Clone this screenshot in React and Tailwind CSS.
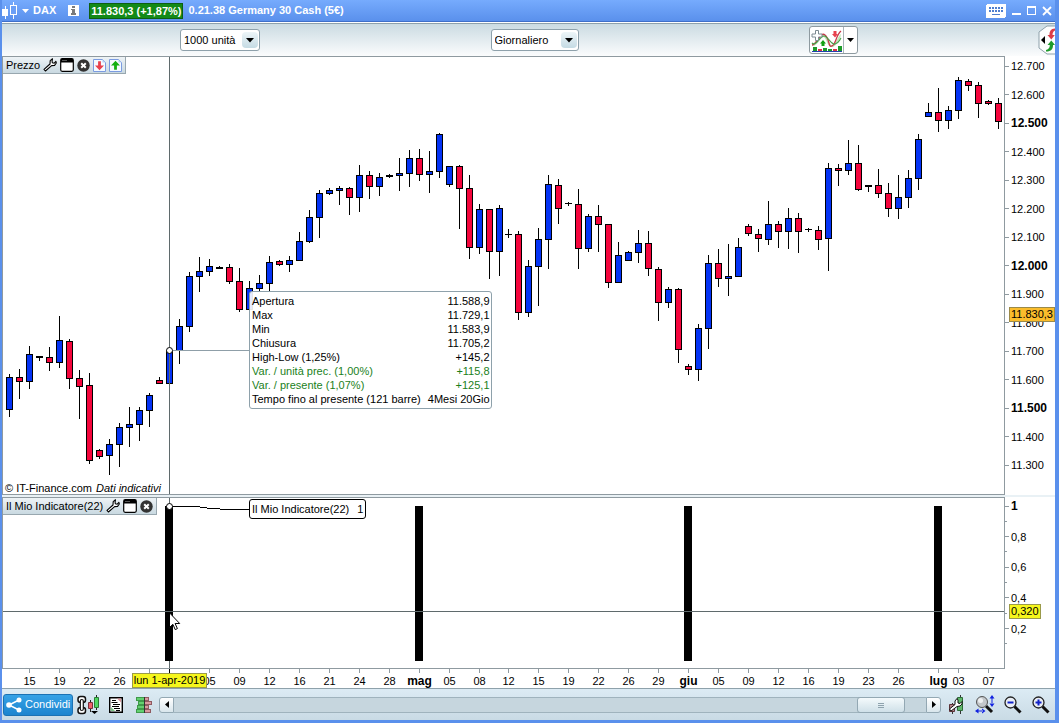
import React, { useState } from 'react';

// Plot coordinates: x 3..1004, price pane y 57..494, indicator pane y 498..668
const X0 = 3;
const PLOT_W = 1001;
const PRICE = { top: 57, height: 437 };
const IND = { top: 498, height: 170 };

// [high, bodyTop, bodyBottom, low, type]  b = up, r = down, d = doji
const CANDLES = [
  [374, 377, 410, 417, 'b'], [369, 377, 382, 399, 'r'], [346, 354, 382, 389, 'b'], [356, 356, 358, 361, 'd'],
  [347, 357, 363, 371, 'r'], [316, 340, 363, 368, 'b'], [339, 341, 379, 389, 'r'], [370, 378, 387, 419, 'r'],
  [373, 385, 461, 464, 'r'], [449, 450, 457, 459, 'r'], [439, 444, 456, 475, 'b'], [423, 427, 445, 467, 'b'],
  [407, 424, 428, 447, 'b'], [407, 410, 425, 441, 'b'], [393, 395, 411, 427, 'b'], [377, 380, 384, 384, 'r'],
  [343, 350, 384, 385, 'b'], [319, 326, 351, 364, 'b'], [272, 276, 327, 332, 'b'], [257, 271, 277, 292, 'b'],
  [259, 266, 272, 276, 'b'], [266, 267, 269, 269, 'd'], [264, 267, 282, 284, 'r'], [268, 281, 310, 312, 'r'],
  [281, 288, 310, 310, 'b'], [275, 283, 289, 292, 'b'], [256, 262, 284, 292, 'b'], [260, 261, 265, 266, 'r'],
  [256, 260, 265, 272, 'b'], [232, 241, 261, 261, 'b'], [210, 217, 242, 243, 'b'], [190, 193, 218, 238, 'b'],
  [188, 190, 194, 195, 'b'], [186, 188, 191, 205, 'b'], [187, 188, 198, 215, 'r'], [165, 175, 198, 212, 'b'],
  [171, 175, 187, 199, 'r'], [173, 177, 187, 196, 'b'], [174, 175, 177, 178, 'd'], [158, 173, 176, 191, 'b'],
  [150, 158, 174, 187, 'b'], [149, 158, 175, 181, 'r'], [151, 171, 175, 193, 'b'], [133, 134, 172, 178, 'b'],
  [166, 166, 185, 187, 'b'], [165, 166, 189, 229, 'r'], [175, 188, 248, 259, 'r'], [204, 209, 248, 254, 'b'],
  [209, 209, 252, 279, 'r'], [205, 208, 252, 276, 'b'], [229, 234, 235, 238, 'd'], [231, 234, 313, 320, 'r'],
  [260, 266, 313, 317, 'b'], [228, 239, 267, 306, 'b'], [175, 184, 240, 269, 'b'], [179, 185, 209, 224, 'r'],
  [202, 203, 204, 206, 'd'], [189, 204, 249, 269, 'r'], [214, 216, 249, 252, 'b'], [205, 216, 225, 252, 'r'],
  [224, 224, 283, 288, 'r'], [242, 255, 283, 283, 'b'], [251, 252, 261, 261, 'b'], [230, 243, 253, 263, 'b'],
  [231, 243, 269, 276, 'r'], [267, 269, 303, 321, 'r'], [287, 289, 303, 308, 'b'], [288, 289, 350, 363, 'r'],
  [364, 366, 370, 375, 'r'], [324, 328, 370, 381, 'b'], [255, 263, 329, 349, 'b'], [249, 263, 279, 287, 'r'],
  [244, 276, 279, 296, 'b'], [238, 247, 277, 277, 'b'], [224, 226, 234, 236, 'r'], [229, 234, 239, 252, 'r'],
  [201, 224, 240, 245, 'b'], [221, 224, 232, 248, 'r'], [208, 218, 232, 249, 'b'], [213, 218, 232, 253, 'r'],
  [228, 229, 230, 232, 'd'], [226, 230, 240, 250, 'r'], [163, 168, 239, 271, 'b'], [164, 168, 171, 186, 'r'],
  [140, 163, 171, 175, 'b'], [145, 163, 190, 191, 'r'], [185, 185, 187, 192, 'd'], [169, 185, 194, 198, 'r'],
  [183, 193, 209, 217, 'r'], [175, 197, 209, 219, 'b'], [170, 178, 198, 208, 'b'], [134, 139, 179, 190, 'b'],
  [103, 112, 117, 117, 'b'], [88, 112, 121, 132, 'r'], [106, 110, 121, 129, 'b'], [77, 80, 111, 119, 'b'],
  [79, 81, 86, 91, 'r'], [82, 85, 104, 118, 'r'], [100, 101, 104, 105, 'r'], [98, 103, 122, 129, 'r'],
];

const PRICE_TICKS = [
  '12.700', '12.600', '12.500', '12.400', '12.300', '12.200', '12.100', '12.000',
  '11.900', '11.800', '11.700', '11.600', '11.500', '11.400', '11.300',
];
const BOLD_PRICES = ['12.500', '12.000', '11.500'];

// empty strings are the minor ticks
const IND_TICKS = ['1', '', '0,8', '', '0,6', '', '0,4', '', '0,2', ''];

const DATES = [
  [29, '15'], [59, '19'], [89, '22'], [119, '26'], [149, ''], [209, '05'], [239, '09'], [269, '12'],
  [299, '16'], [329, '21'], [359, '24'], [389, '28'], [419, 'mag'], [449, '05'], [479, '08'], [508, '12'],
  [538, '15'], [568, '19'], [598, '22'], [628, '26'], [658, '29'], [688, 'giu'], [718, '05'], [748, '09'],
  [778, '12'], [808, '16'], [838, '19'], [868, '23'], [898, '26'], [938, 'lug'], [958, '03'], [988, '07'],
];

const SIGNALS = [169, 419, 688, 938];

const QUOTE = [
  ['Apertura', '11.588,9'],
  ['Max', '11.729,1'],
  ['Min', '11.583,9'],
  ['Chiusura', '11.705,2'],
  ['High-Low (1,25%)', '+145,2'],
  ['Var. / unità prec. (1,00%)', '+115,8', true],
  ['Var. / presente (1,07%)', '+125,1', true],
  ['Tempo fino al presente (121 barre)', '4Mesi 20Gio'],
];

const left = (x) => `${((x - X0) / PLOT_W) * 100}%`;
const top = (y, pane) => `${((y - pane.top) / pane.height) * 100}%`;

function WrenchIcon() {
  return (
    <svg width="14" height="14" viewBox="0 0 14 14" fill="#fff" stroke="#000" strokeWidth="1.1" strokeLinejoin="round">
      <path d="M9.5 .8 7.2 2.6 7 6 1 11.3 2.4 13 8.6 7.6 11.6 7.4 13.3 5 12.9 3.4 11.2 5.2 9.3 4.8 9.1 3z" />
    </svg>
  );
}

function WindowIcon() {
  return (
    <svg width="14" height="14" viewBox="0 0 14 14">
      <rect x=".7" y=".7" width="12.6" height="12.6" rx="1.5" fill="#fff" stroke="#000" strokeWidth="1.2" />
      <path d="M1 1h12v3.5H1z" />
      <path d="M2 2h5v1H2z" fill="#555" />
    </svg>
  );
}

function CloseIcon() {
  return (
    <svg width="13" height="13" viewBox="0 0 13 13">
      <circle cx="6.5" cy="6.5" r="6.2" fill="#333" />
      <path d="M4.2 4.2l4.6 4.6M8.800 4.2L4.2 8.800" stroke="#fff" strokeWidth="2" />
    </svg>
  );
}

function PageArrowIcon({ up }) {
  return (
    <svg width="13" height="13" viewBox="0 0 13 13">
      <path d="M.5 .5h9l3 3v9H.5z" fill="#f4faff" stroke="#7b9be0" />
      <path d="M9.5 .5v3h3z" fill="#b7cdf2" />
      {up ? (
        <path d="M6.5 1.8 11 6.4H7.9v4.4H5.1V6.4H2z" fill="#12b012" />
      ) : (
        <path d="M6.5 11.2 11 6.6H7.9V2.2H5.1v4.4H2z" fill="#e8414d" />
      )}
    </svg>
  );
}

function PanelTab({ title, arrows }) {
  return (
    <div className="absolute left-0 top-0 flex h-[17px] items-center gap-[3px] border-b border-r border-[#98a7af] bg-linear-to-b from-[#eef3f6] to-[#c9d9e1] px-[3px]">
      <span className="whitespace-nowrap">{title}</span>
      <button aria-label="Proprietà"><WrenchIcon /></button>
      <button aria-label="Finestra"><WindowIcon /></button>
      <button aria-label="Chiudi pannello"><CloseIcon /></button>
      {arrows && <button aria-label="Sposta giù"><PageArrowIcon /></button>}
      {arrows && <button aria-label="Sposta su"><PageArrowIcon up /></button>}
    </div>
  );
}

function Marker({ x, y, pane }) {
  return (
    <span
      className="absolute -ml-[3px] -mt-[3px] size-[7px] rounded-full border border-black bg-white"
      style={{ left: left(x), top: top(y, pane) }}
    />
  );
}

function TitleBar() {
  return (
    <header className="flex h-[22px] items-center border-b border-[#3f6fc8] bg-linear-to-b from-[#76abfd] to-[#5a90ec] pr-[3px] font-bold text-white">
      <svg width="16" height="17" viewBox="0 0 16 17" shapeRendering="crispEdges">
        <path d="M0 7h6v7H0zM3 4h1v13H3zM11 0h1v17h-1z" fill="#fff" />
        <path d="M8.5 3.5h6v9h-6z" fill="#6b9ff5" stroke="#fff" />
      </svg>
      <svg className="ml-1" width="7" height="4" viewBox="0 0 7 4"><path d="M0 0h7L3.5 4z" fill="#fff" /></svg>
      <span className="ml-1">DAX</span>
      <svg className="ml-3" width="11" height="11" viewBox="0 0 11 11" shapeRendering="crispEdges">
        <path d="M0 0h11v11H0z" fill="#fff" />
        <path d="M4 1h3v2H4zM3 4h4v4h1v2H3V8h1V5H3z" fill="#7b7b7b" />
      </svg>
      <span className="ml-[10px] border border-[#0c5f12] bg-[#138a17] px-px leading-[14px]">11.830,3 (+1,87%)</span>
      <span className="ml-[5px] flex-1 whitespace-nowrap">0.21.38 Germany 30 Cash (5€)</span>
      <button aria-label="Tastiera">
        <svg width="20" height="14" viewBox="0 0 20 14" shapeRendering="crispEdges">
          <rect width="20" height="14" rx="2" fill="#fff" />
          <path d="M3 4h14M3 7h14" stroke="#4f7fd0" strokeWidth="2" strokeDasharray="2 1" />
          <path d="M6 10h8v1H6z" fill="#4f7fd0" />
        </svg>
      </button>
      <button aria-label="Riduci" className="ml-1.5">
        <svg width="10" height="10" viewBox="0 0 10 10"><path d="M0 7h9v2H0z" fill="#fff" /></svg>
      </button>
      <button aria-label="Ingrandisci" className="ml-[5px]">
        <svg width="10" height="10" viewBox="0 0 10 10" shapeRendering="crispEdges"><path d="M0 0h9v9H0zM1 2v6h7V2z" fill="#fff" fillRule="evenodd" /></svg>
      </button>
      <button aria-label="Chiudi" className="ml-[5px]">
        <svg width="10" height="10" viewBox="0 0 10 10"><path d="M1 1l8 8M9 1L1 9" stroke="#fff" strokeWidth="1.8" /></svg>
      </button>
    </header>
  );
}

function Dropdown({ label, options, width }) {
  return (
    <label className="relative block">
      <select
        aria-label={label}
        className={`block h-[22px] appearance-none rounded-[3px] border border-[#8ea1ab] bg-white pl-[3px] ${width}`}
      >
        {options.map((o) => <option key={o}>{o}</option>)}
      </select>
      <span className="pointer-events-none absolute bottom-[3px] right-[2px] top-[3px] flex w-4 items-center justify-center rounded-sm bg-linear-to-b from-[#edf5f8] to-[#c5dbe4]">
        <svg width="8" height="5" viewBox="0 0 8 5"><path d="M0 0h8L4 4.5z" /></svg>
      </span>
    </label>
  );
}

function Toolbar() {
  return (
    <div className="flex h-[33px] items-center border-t border-[#8ea1ab] bg-linear-to-b from-[#cbdbe2] to-[#fbfcfd]">
      <div className="flex flex-1 items-center justify-between pl-[178px] pr-[180px]">
        <Dropdown label="Unità" options={['1000 unità', '500 unità', '200 unità']} width="w-20" />
        <Dropdown label="Periodo" options={['Giornaliero', 'Settimanale', 'Mensile']} width="w-22" />
        <div className="flex h-7 rounded-[3px] border border-[#8e9aa0] bg-white">
          <button aria-label="Aggiungi indicatore" className="px-px">
            <svg width="31" height="25" viewBox="0 0 31 25">
              <path d="M1 16C5 17 8 4 13 7s6 14 10 9 5-9 7-10l-1 5c-3 4-5 9-9 8S15 8 12 9 6 19 1 18z" fill="#bfe8b8" />
              <path d="M1 17C6 17 9 3 14 7s3 13 7 11 4-11 9-15" fill="none" stroke="#c8384a" strokeWidth="1.3" />
              <path d="M1 15C5 19 9 8 13 8s7 9 11 8 4-3 6-6" fill="none" stroke="#46a04a" strokeWidth="1.2" />
              <path d="M4.500 2.500h3v3.500h3.500v3H7.500v3.500h-3V9H1V6h3.500z" fill="#fff" stroke="#7d8a90" />
              <path d="M22.500 3h3v3h1.500l-3 3.500-3-3.500h1.500z" fill="#e8414d" />
              <path d="M12 12l3 3.500h-1.500V18h-3v-2.500H9z" fill="#12a012" />
              <path d="M2 19h4v4H2zM12 20h4v3h-4zM17 21h4v2h-4zM27 18h4v5h-4z" fill="#1d9b2a" />
              <path d="M7 21h4v2H7zM22 21h4v2h-4z" fill="#d8344a" />
              <path d="M1 23h30v1H1z" fill="#2340b0" />
            </svg>
          </button>
          <button aria-label="Elenco indicatori" className="flex w-[14px] items-center justify-center border-l border-[#a9b4ba]">
            <svg width="7" height="4" viewBox="0 0 7 4"><path d="M0 0h7L3.5 4z" /></svg>
          </button>
        </div>
      </div>
      <button aria-label="Ordini">
        <svg width="17" height="30" viewBox="0 0 17 30">
          <path d="M17.5 1H9L1 7v16l8 6h8.5z" fill="#fdfdfd" stroke="#8ea1ab" />
          <path d="M7 11v8l-4-4z" />
          <path d="M17 3.500c-4.500 0-5.500 3-5.500 6.500H9.500l3.800 4.500 3.500-4.500h-2.300c0-2 .5-3.500 2.500-4.500z" fill="#dc3c48" />
          <path d="M8 26.500c5.500 0 7-2.500 7-6.500h2l-3.700-4.500L9.500 20h2.300c0 2.500-.8 4-3.800 5z" fill="#1f9a2c" />
        </svg>
      </button>
    </div>
  );
}

function PricePane() {
  return (
    <div className="flex min-h-0 flex-1">
      <div className="relative min-w-0 flex-1 border border-[#8f9aa0]">
        <svg
          className="absolute inset-0 size-full"
          viewBox="3 57 1001 437"
          preserveAspectRatio="none"
          shapeRendering="crispEdges"
        >
          {CANDLES.map(([hi, a, b, lo, type], i) => {
            const x = 9 + i * 10 - (i >= 50 ? 1 : 0);
            return (
              <g key={i}>
                <rect x={x} y={hi} width="1" height={Math.max(lo - hi, 1)} />
                <rect x={x - 3} y={a} width="7" height={b - a} />
                {type !== 'd' && (
                  <rect x={x - 2} y={a + 1} width="5" height={b - a - 2} fill={type === 'b' ? '#0433f5' : '#f5053c'} />
                )}
              </g>
            );
          })}
          <rect x="169" y="57" width="1" height="437" fill="#5f6a6c" />
          <rect x="170" y="350" width="80" height="1" fill="#8f9fa8" />
        </svg>
        <Marker x={169} y={350} pane={PRICE} />
        <PanelTab title="Prezzo" arrows />

        <table
          className="absolute border-separate border-spacing-0 rounded-[3px] border border-[#8ea1ab] bg-white/90 py-[2px] leading-[14px]"
          style={{ left: left(249), top: top(291, PRICE) }}
        >
          <tbody>
            {QUOTE.map(([name, value, gain]) => (
              <tr key={name} className={gain ? 'text-[#1b7f1b]' : ''}>
                <th className="whitespace-nowrap pl-[2px] pr-[7px] text-left font-normal">{name}</th>
                <td className="whitespace-nowrap pr-px text-right">{value}</td>
              </tr>
            ))}
          </tbody>
        </table>

        <p className="absolute bottom-0 left-[2px] leading-3">
          © IT-Finance.com <i className="ml-px">Dati indicativi</i>
        </p>
      </div>

      <div className="relative flex w-[50px] flex-col justify-between pb-6 pt-1">
        {PRICE_TICKS.map((t) => (
          <div key={t} className="flex h-3 items-center gap-[2px] leading-3">
            <span className="h-px w-1 bg-[#8f9aa0]" />
            <span className={BOLD_PRICES.includes(t) ? 'text-[12px] font-bold' : ''}>{t}</span>
          </div>
        ))}
        <span
          className="absolute right-0 border border-[#9a8a4a] bg-[#fbbd2c] px-px leading-[13px]"
          style={{ top: top(307, PRICE) }}
        >
          11.830,3
        </span>
      </div>
    </div>
  );
}

function IndicatorPane() {
  return (
    <div className="flex h-[172px]">
      <div className="relative min-w-0 flex-1 border border-[#8f9aa0]">
        <svg
          className="absolute inset-0 size-full"
          viewBox="3 498 1001 170"
          preserveAspectRatio="none"
          shapeRendering="crispEdges"
        >
          <rect x="169" y="498" width="1" height="170" fill="#5f6a6c" />
          {SIGNALS.map((x) => <rect key={x} x={x - 4} y="506" width="8" height="155" />)}
          <rect x="3" y="611" width="1001" height="1" fill="#5f6a6c" />
          <path d="M170 506.5H196L210 508.5L230 509.5H250" fill="none" stroke="#000" />
        </svg>
        <Marker x={169} y={506} pane={IND} />
        <PanelTab title="Il Mio Indicatore(22)" />
        <div
          className="absolute flex gap-2 whitespace-nowrap rounded-[3px] border border-black bg-white px-[2px] leading-[18px]"
          style={{ left: left(249), top: top(499, IND) }}
        >
          <span>Il Mio Indicatore(22)</span>
          <span>1</span>
        </div>
        <svg
          className="absolute"
          width="12"
          height="19"
          viewBox="0 0 12 19"
          style={{ left: left(169), top: top(612, IND) }}
        >
          <path d="M.5 .8v14.7l3.4-3.2 2.3 5.3 2.2-1-2.3-5.1h4.6z" fill="#fff" stroke="#000" />
        </svg>
      </div>

      <div className="relative flex w-[50px] flex-col justify-between pb-[19px] pt-[3px]">
        {IND_TICKS.map((t, i) => (
          <div key={i} className="flex h-3 items-center gap-[2px] leading-3">
            <span className={t ? 'h-px w-1 bg-[#8f9aa0]' : 'h-px w-[2px] bg-[#8f9aa0]'} />
            <span className={t === '1' ? 'text-[12px] font-bold' : ''}>{t}</span>
          </div>
        ))}
        <span
          className="absolute left-1 border border-[#9a9a4a] bg-[#f6f61c] px-px leading-[13px]"
          style={{ top: top(604, IND) }}
        >
          0,320
        </span>
      </div>
    </div>
  );
}

function TimeAxis() {
  return (
    <div className="flex h-5 border-b border-[#8ea1ab] pl-px pr-[51px]">
      <div className="relative flex-1">
        {DATES.map(([x, text]) => (
          <div
            key={x}
            className="absolute top-0 -ml-5 flex w-[41px] flex-col items-center"
            style={{ left: left(x) }}
          >
            <span className="h-1 w-px bg-[#8f9aa0]" />
            <span className={/[a-z]/.test(text) ? 'text-[12px] font-bold leading-4' : 'leading-4'}>{text}</span>
          </div>
        ))}
        <div className="absolute top-0 -ml-[37px] flex w-[75px] flex-col items-center" style={{ left: left(169) }}>
          <span className="h-1 w-px bg-black" />
          <span className="whitespace-nowrap border border-[#9a9a4a] bg-[#f6f61c] px-px leading-[13px]">lun 1-apr-2019</span>
        </div>
      </div>
    </div>
  );
}

function ZoomIcon({ plus }) {
  return (
    <svg width="18" height="18" viewBox="0 0 18 18">
      <path d="M10.5 10.5l6 6" stroke="#111" strokeWidth="3" />
      <circle cx="6.5" cy="6.5" r="5.5" fill="#e9eef5" stroke="#222" strokeWidth="1.3" />
      <path d={plus ? 'M3.5 6.5h6M6.5 3.5v6' : 'M3.5 6.5h6'} stroke="#1122c8" strokeWidth="2" />
    </svg>
  );
}

function BottomBar() {
  const [scroll, setScroll] = useState(97);
  const arrow = 'flex h-4 w-[15px] items-center justify-center border border-[#93a8b3] bg-linear-to-b from-white to-[#d9e6ec]';

  return (
    <footer className="flex h-[31px] items-center bg-linear-to-b from-[#dcebf4] to-[#c9dbe5] pr-[5px]">
      <button className="ml-px flex h-[22px] items-center gap-[3px] rounded-[3px] border border-[#1b72b4] bg-linear-to-b from-[#36a2e6] to-[#1c84cf] px-[2px] text-white">
        <svg width="16" height="16" viewBox="0 0 16 16" fill="#fff">
          <path d="M13 3L3 8l10 5" fill="none" stroke="#fff" strokeWidth="1.5" />
          <circle cx="13" cy="3" r="2.5" />
          <circle cx="3" cy="8" r="2.8" />
          <circle cx="13" cy="13" r="2.5" />
        </svg>
        Condividi
      </button>
      <button aria-label="Collega grafici" className="ml-1">
        <svg width="23" height="20" viewBox="0 0 23 20">
          <g fill="#fff" stroke="#111" strokeWidth="1.5">
            <rect x="1" y="1.5" width="7.5" height="6" rx="2.5" />
            <rect x="1" y="12.5" width="7.5" height="6" rx="2.5" />
            <rect x="3.3" y="4.5" width="3" height="11" rx="1.5" strokeWidth="1.2" />
          </g>
          <path d="M13.5 5v12M19.5 0v15" stroke="#222" />
          <path d="M11.5 7.5h4v6h-4z" fill="#f0616d" stroke="#7a3038" />
          <path d="M17.5 2.5h4v10h-4z" fill="#4fd860" stroke="#2d7a36" />
          <path d="M14 16h7l-3.5 3z" />
        </svg>
      </button>
      <button aria-label="Notizie" className="ml-[9px]">
        <svg width="14" height="16" viewBox="0 0 14 16">
          <path d="M.7 .7h12.6v14.6H.7z" fill="#fff" stroke="#000" strokeWidth="1.4" />
          <path d="M3 3.5h4M2.5 5.5h6M4 7.500h7M3 9.5h7M5 11.5h6M7 13.500h4" stroke="#000" strokeWidth="1.2" />
          <path d="M8 1.5h4v4z" fill="#d8949b" />
          <path d="M2 10v4h4z" fill="#7ac487" />
        </svg>
      </button>
      <button aria-label="Book ordini" className="ml-[13px]">
        <svg width="16" height="16" viewBox="0 0 16 16" shapeRendering="crispEdges">
          <path d="M0 0h8v4H0zM2 4h6v4H2zM1 8h7v4H1zM0 12h8v4H0z" fill="#3f9a4a" />
          <path d="M1 1h7v2H1zM3 5h5v2H3zM2 9h6v2H2zM1 13h7v2H1z" fill="#63d070" />
          <path d="M8 0h5v4H8zM8 4h8v4H8zM8 8h5v4H8zM8 12h7v4H8z" fill="#8f5a60" />
          <path d="M8 1h4v2H8zM8 5h7v2H8zM8 9h4v2H8zM8 13h6v2H8z" fill="#d99aa0" />
          <path d="M8 0h1v16H8z" fill="#333" />
        </svg>
      </button>
      <div className="ml-[7px] flex h-4 flex-1 items-center">
        <button aria-label="Scorri a sinistra" className={`${arrow} rounded-l-[3px]`}>
          <svg width="4" height="7" viewBox="0 0 4 7"><path d="M4 0v7L0 3.5z" /></svg>
        </button>
        <input
          type="range"
          aria-label="Posizione nel grafico"
          value={scroll}
          onChange={(e) => setScroll(Number(e.target.value))}
          className="h-4 min-w-0 flex-1 appearance-none border-y border-[#9fb3bd] bg-[#c6d6de] [&::-webkit-slider-thumb]:h-4 [&::-webkit-slider-thumb]:w-12 [&::-webkit-slider-thumb]:appearance-none [&::-webkit-slider-thumb]:rounded-[3px] [&::-webkit-slider-thumb]:border [&::-webkit-slider-thumb]:border-[#93a8b3] [&::-webkit-slider-thumb]:bg-[linear-gradient(#8fa3ae,#8fa3ae),linear-gradient(#8fa3ae,#8fa3ae),linear-gradient(#8fa3ae,#8fa3ae),linear-gradient(#f4fafc,#cfe0e8)] [&::-webkit-slider-thumb]:bg-[size:6px_1px,6px_1px,6px_1px,100%_100%] [&::-webkit-slider-thumb]:bg-[position:20px_5px,20px_7px,20px_9px,0_0] [&::-webkit-slider-thumb]:bg-no-repeat"
        />
        <button aria-label="Scorri a destra" className={`${arrow} rounded-r-[3px]`}>
          <svg width="4" height="7" viewBox="0 0 4 7"><path d="M0 0v7l4-3.5z" /></svg>
        </button>
      </div>
      <button aria-label="Impostazioni grafico" className="ml-[7px]">
        <svg width="17" height="20" viewBox="0 0 17 20">
          <path d="M12.5 0v19M4.5 8v11" stroke="#333" />
          <path d="M9.5 2.5h5v13h-5z" fill="#5fb86a" stroke="#2f6b38" />
          <path d="M1.5 9.5h5v7h-5z" fill="#b58289" stroke="#5c3338" />
          <path d="M9 3.5 7 6v3.5L1.5 14 3 16l6-4.5 3-.5L14 9V6.5L12 8.5l-2-.5V5z" fill="#fff" stroke="#111" />
        </svg>
      </button>
      <button aria-label="Zoom automatico" className="ml-[10px]">
        <svg width="20" height="19" viewBox="0 0 20 19">
          <path d="M11 11l6 6" stroke="#111" strokeWidth="3" />
          <circle cx="7" cy="7" r="5.5" fill="#c3c7ca" stroke="#555" />
          <circle cx="5.5" cy="5.5" r="2.5" fill="#eef0f1" />
          <g fill="#1122e0">
            <path d="M16.500 3h1v6h-1zM17 0l2.500 3.5h-5zM17 12l2.500-3.5h-5z" />
            <path d="M3 15.500h5v1H3zM0 16l3.5-2.500v5zM10.5 16L7 13.500v5z" />
          </g>
        </svg>
      </button>
      <button aria-label="Riduci zoom" className="ml-[9px]"><ZoomIcon /></button>
      <button aria-label="Aumenta zoom" className="ml-[10px]"><ZoomIcon plus /></button>
    </footer>
  );
}

export default function App() {
  return (
    <div className="flex h-screen min-h-[480px] flex-col border-b-[3px] border-l-2 border-r-4 border-[#5a90ec] bg-white font-['Liberation_Sans',Arial,sans-serif] text-[11px] text-black">
      <TitleBar />
      <div className="h-px bg-white" />
      <Toolbar />
      <PricePane />
      <div className="h-[2px] bg-[#e9f1f5]" />
      <IndicatorPane />
      <TimeAxis />
      <BottomBar />
    </div>
  );
}
